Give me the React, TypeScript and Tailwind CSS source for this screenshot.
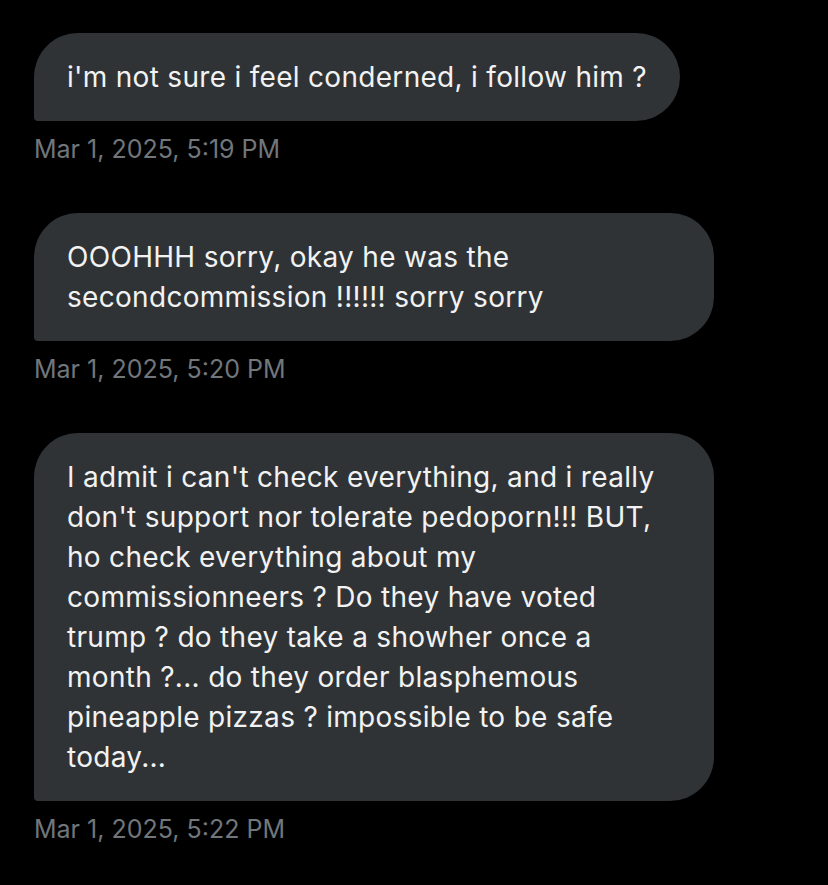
import React from "react";

const font = { fontFamily: "Inter, 'Noto Sans', sans-serif" };

function Bubble({ lines, wide }: { lines: string[]; wide?: boolean }) {
  return (
    <div
      className={`${wide ? "w-[680px]" : "w-fit"} bg-[#2f3336] rounded-[44px] rounded-bl-[4px] pl-[33px] pr-[33px] py-[24px] text-[28px] leading-[40px] tracking-[0.3px] text-[#f2f2f2] whitespace-nowrap`}
    >
      {lines.map((l, i) => (
        <div key={i}>{l}</div>
      ))}
    </div>
  );
}

function Stamp({ t }: { t: string }) {
  return <div className="mt-[12px] text-[25px] leading-[32px] text-[#71767b]">{t}</div>;
}

export default function App() {
  return (
    <div className="w-[828px] h-[885px] bg-black overflow-hidden pl-[34px] pt-[33px]" style={font}>
      <div className="flex flex-col">
        <Bubble lines={["i'm not sure i feel conderned, i follow him ?"]} />
        <Stamp t="Mar 1, 2025, 5:19 PM" />
        <div className="h-[48px]" />
        <Bubble wide lines={["OOOHHH sorry, okay he was the", "secondcommission !!!!!! sorry sorry"]} />
        <Stamp t="Mar 1, 2025, 5:20 PM" />
        <div className="h-[48px]" />
        <Bubble
          wide
          lines={[
            "I admit i can't check everything, and i really",
            "don't support nor tolerate pedoporn!!! BUT,",
            "ho check everything about my",
            "commissionneers ? Do they have voted",
            "trump ? do they take a showher once a",
            "month ?... do they order blasphemous",
            "pineapple pizzas ? impossible to be safe",
            "today...",
          ]}
        />
        <Stamp t="Mar 1, 2025, 5:22 PM" />
      </div>
    </div>
  );
}
